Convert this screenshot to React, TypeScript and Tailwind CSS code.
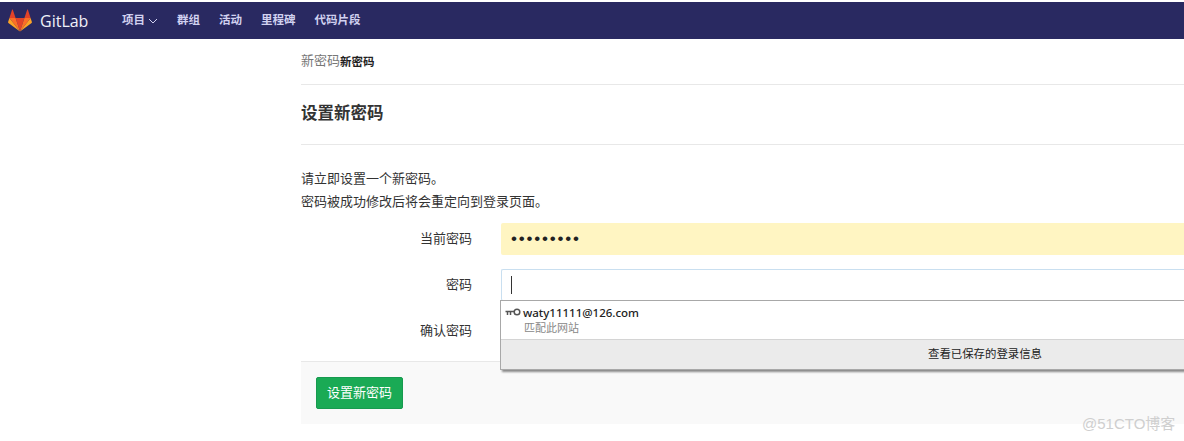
const cjk = "font-['Liberation_Sans','Noto_Sans_CJK_SC',sans-serif]";

function GitLabLogo() {
  return (
    <svg width="24" height="23" viewBox="0 0 24 23">
      <path d="M12 22.5 16.4 9H7.6z" fill="#e24329" />
      <path d="M12 22.5 7.6 9H1.4z" fill="#fc6d26" />
      <path d="M1.4 9 .1 13.1c-.1.4 0 .8.3 1L12 22.5z" fill="#fca326" />
      <path d="M1.4 9h6.2L4.9.9c-.1-.4-.7-.4-.9 0z" fill="#e24329" />
      <path d="M12 22.5 16.4 9h6.2z" fill="#fc6d26" />
      <path d="M22.6 9l1.3 4.1c.1.4 0 .8-.3 1L12 22.5z" fill="#fca326" />
      <path d="M22.6 9h-6.2l2.7-8.1c.1-.4.7-.4.9 0z" fill="#e24329" />
    </svg>
  );
}

function NavBar() {
  return (
    <div className="mt-[2px] flex h-[37px] items-center bg-[#292961] pl-[8px] text-[#d1d1f0]">
      <GitLabLogo />
      <span className="ml-[8px] w-[49px] font-['Open_Sans',sans-serif] text-[16px] text-[#f0f0f8]">GitLab</span>
      <div className="ml-[33px] flex items-center gap-[19px] text-[11.5px] font-semibold">
        <span className="flex items-center gap-[3px]">
          项目
          <svg width="10" height="6" viewBox="0 0 10 6" fill="none" stroke="#d1d1f0" strokeWidth="1">
            <path d="M1 1l4 4 4-4" />
          </svg>
        </span>
        <span>群组</span>
        <span>活动</span>
        <span>里程碑</span>
        <span>代码片段</span>
      </div>
    </div>
  );
}

function FormRow({ label, children }: { label: string; children?: React.ReactNode }) {
  return (
    <div className="flex items-center">
      <label className="w-[172px] pr-[1px] text-right text-[13px] text-[#333]">{label}</label>
      <div className="ml-[28px] flex-1">{children}</div>
    </div>
  );
}

function SavedLoginPopup() {
  return (
    <div className="absolute left-[500px] top-[300px] h-[70px] w-[968px] border border-[#a8a8a8] bg-white shadow-[2px_2px_2px_rgba(0,0,0,0.45)]">
      <div className="flex h-[38px] pl-[4px] pt-[4px]">
        <svg className="mt-[3px]" width="16" height="9" viewBox="0 0 16 9" fill="none" stroke="#555">
          <circle cx="12" cy="4" r="2.8" strokeWidth="1.5" />
          <path d="M9 3.5H.5M2.5 3.5V7M5.5 3.5V7" strokeWidth="1.5" />
        </svg>
        <div className="ml-[2px]">
          <div className="font-['Noto_Sans',sans-serif] text-[11.5px] font-medium leading-[15px] text-[#222]">waty11111@126.com</div>
          <div className="ml-[1px] mt-[1px] text-[11px] leading-[15px] text-[#888]">匹配此网站</div>
        </div>
      </div>
      <div className="flex h-[30px] items-center justify-center border-t border-[#d4d4d4] bg-[#ebebeb] pl-[2px] text-[11.4px] text-[#222]">
        查看已保存的登录信息
      </div>
    </div>
  );
}

export default function App() {
  return (
    <div className={`relative h-[441px] w-[1184px] overflow-hidden bg-white ${cjk}`}>
      <NavBar />
      <div className="ml-[301px]">
        <div className="flex h-[46px] items-center border-b border-[#e8e8e8] pt-[3px] text-[13px]">
          <span className="-mt-[5px] text-[#777]">新密码</span>
          <span className="text-[11.5px] font-semibold text-[#222]">新密码</span>
        </div>
        <h1 className="flex h-[60px] items-center border-b border-[#e8e8e8] pb-[3px] text-[16.5px] font-bold text-[#333]">设置新密码</h1>
        <div className="mt-[22px] text-[13px] leading-[23px] text-[#333]">
          <p>请立即设置一个新密码。</p>
          <p>密码被成功修改后将会重定向到登录页面。</p>
        </div>
        <div className="mt-[10px] flex flex-col gap-[14px]">
          <FormRow label="当前密码">
            <div className="flex h-[32px] items-center rounded-l-[2px] bg-[#fff5c2] pl-[10px] font-['Liberation_Sans',sans-serif] text-[17px] tracking-[1.8px] text-[#222]">
              •••••••••
            </div>
          </FormRow>
          <FormRow label="密码">
            <div className="flex h-[32px] items-center rounded-l-[2px] border border-r-0 border-[#c9dff0] bg-white pl-[9px]">
              <div className="h-[18px] w-[1px] bg-[#333]" />
            </div>
          </FormRow>
          <FormRow label="确认密码">
            <div className="h-[32px]" />
          </FormRow>
        </div>
        <div className="mt-[14px] h-[63px] border-t border-[#e8e8e8] bg-[#f9f9f9] pl-[15px] pt-[15px]">
          <button className="h-[32px] w-[87px] rounded-[2px] border border-[#179a4f] bg-[#1aaa55] text-[13px] text-white">
            设置新密码
          </button>
        </div>
      </div>
      <SavedLoginPopup />
      <span className="absolute left-[1082px] top-[414px] text-[15px] leading-[20px] text-[#cfcfcf]">
        @51CTO博客
      </span>
    </div>
  );
}
